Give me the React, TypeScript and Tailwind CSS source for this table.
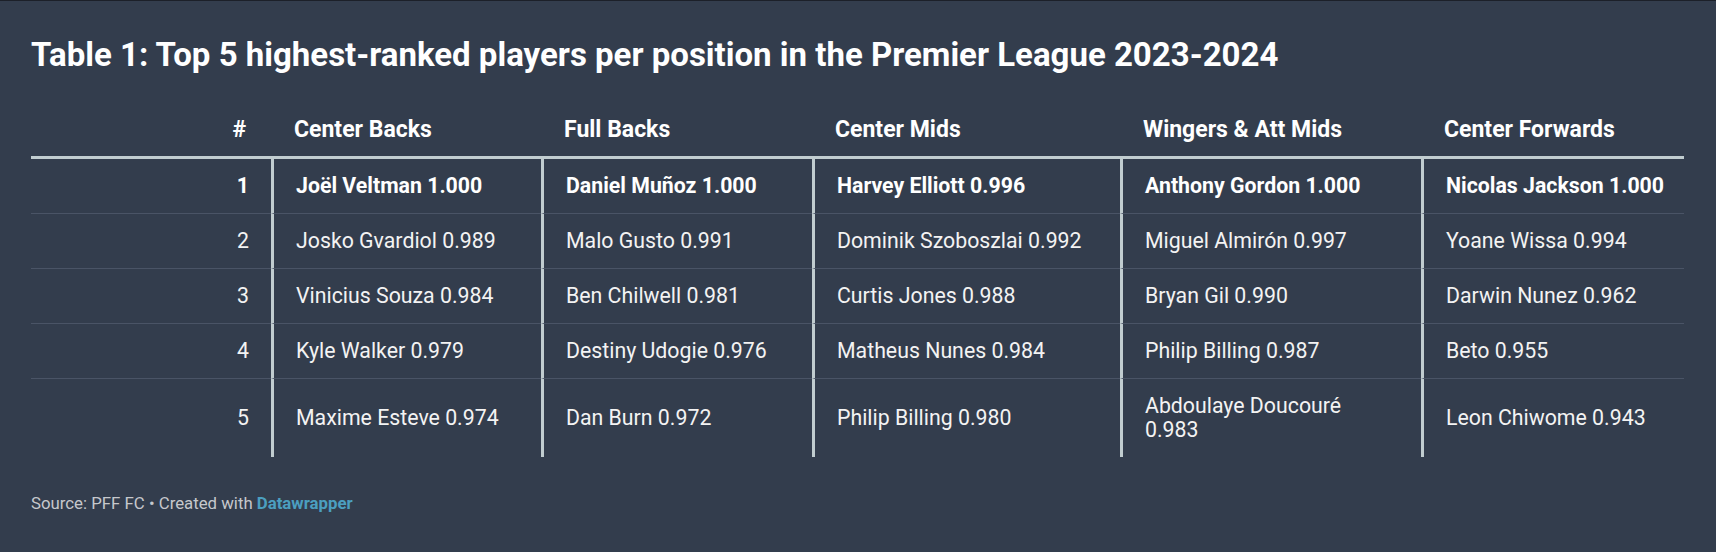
import React from "react";

const columns = [
  { label: "Center Backs", pr: "pr-[16px]" },
  { label: "Full Backs", pr: "pr-[16px]" },
  { label: "Center Mids", pr: "pr-[16px]" },
  { label: "Wingers & Att Mids", pr: "pr-[28px]" },
  { label: "Center Forwards", pr: "pr-[8px]" },
];

const rows: [number, string[]][] = [
  [1, ["Joël Veltman 1.000", "Daniel Muñoz 1.000", "Harvey Elliott 0.996", "Anthony Gordon 1.000", "Nicolas Jackson 1.000"]],
  [2, ["Josko Gvardiol 0.989", "Malo Gusto 0.991", "Dominik Szoboszlai 0.992", "Miguel Almirón 0.997", "Yoane Wissa 0.994"]],
  [3, ["Vinicius Souza 0.984", "Ben Chilwell 0.981", "Curtis Jones 0.988", "Bryan Gil 0.990", "Darwin Nunez 0.962"]],
  [4, ["Kyle Walker 0.979", "Destiny Udogie 0.976", "Matheus Nunes 0.984", "Philip Billing 0.987", "Beto 0.955"]],
  [5, ["Maxime Esteve 0.974", "Dan Burn 0.972", "Philip Billing 0.980", "Abdoulaye Doucouré 0.983", "Leon Chiwome 0.943"]],
];

export default function App() {
  return (
    <div
      className="h-[552px] w-[1716px] overflow-hidden border-t border-[#1c2029] bg-[#333d4d] pl-[31px] pr-[32px] pt-[34px] text-white"
      style={{ fontFamily: "Roboto, 'Liberation Sans', sans-serif" }}
    >
      {/* Title */}
      <h1 className="text-[33px] font-bold leading-[40px] text-white">
        Table 1: Top 5 highest-ranked players per position in the Premier League 2023-2024
      </h1>

      {/* Table */}
      <table className="mt-[29px] w-[1653px] table-fixed border-separate border-spacing-0 text-[21.3px] leading-[24px]">
        <colgroup>
          <col className="w-[240px]" />
          <col className="w-[270px]" />
          <col className="w-[271px]" />
          <col className="w-[308px]" />
          <col className="w-[301px]" />
          <col className="w-[263px]" />
        </colgroup>
        <thead>
          <tr className="text-[23px]">
            <th className="border-b-[3px] border-[#c1cdd0] pb-[14px] pr-[25px] pt-[14px] text-right font-bold">#</th>
            {columns.map((c) => (
              <th key={c.label} className="border-b-[3px] border-[#c1cdd0] pb-[14px] pl-[23px] pt-[14px] text-left font-bold">
                {c.label}
              </th>
            ))}
          </tr>
        </thead>
        <tbody>
          {rows.map(([n, players], i) => {
            const last = i === rows.length - 1;
            const weight = n === 1 ? "font-bold text-white" : "font-normal text-[#f3f3f3]";
            const sep = last ? "" : "border-b border-b-[#4a5466]";
            return (
              <tr key={n}>
                <td className={`py-[15px] pr-[22px] text-right ${weight} ${sep}`}>{n}</td>
                {players.map((p, j) => (
                  <td
                    key={p}
                    className={`border-l-[3px] border-l-[#c1cdd0] py-[15px] pl-[22px] align-middle ${columns[j].pr} ${weight} ${sep}`}
                  >
                    {p}
                  </td>
                ))}
              </tr>
            );
          })}
        </tbody>
      </table>

      {/* Footer */}
      <p className="mt-[36px] text-[16.8px] leading-[20px] text-[#c6c8cc]">
        Source: PFF FC • Created with <span className="font-bold text-[#4b9fc0]">Datawrapper</span>
      </p>
    </div>
  );
}
